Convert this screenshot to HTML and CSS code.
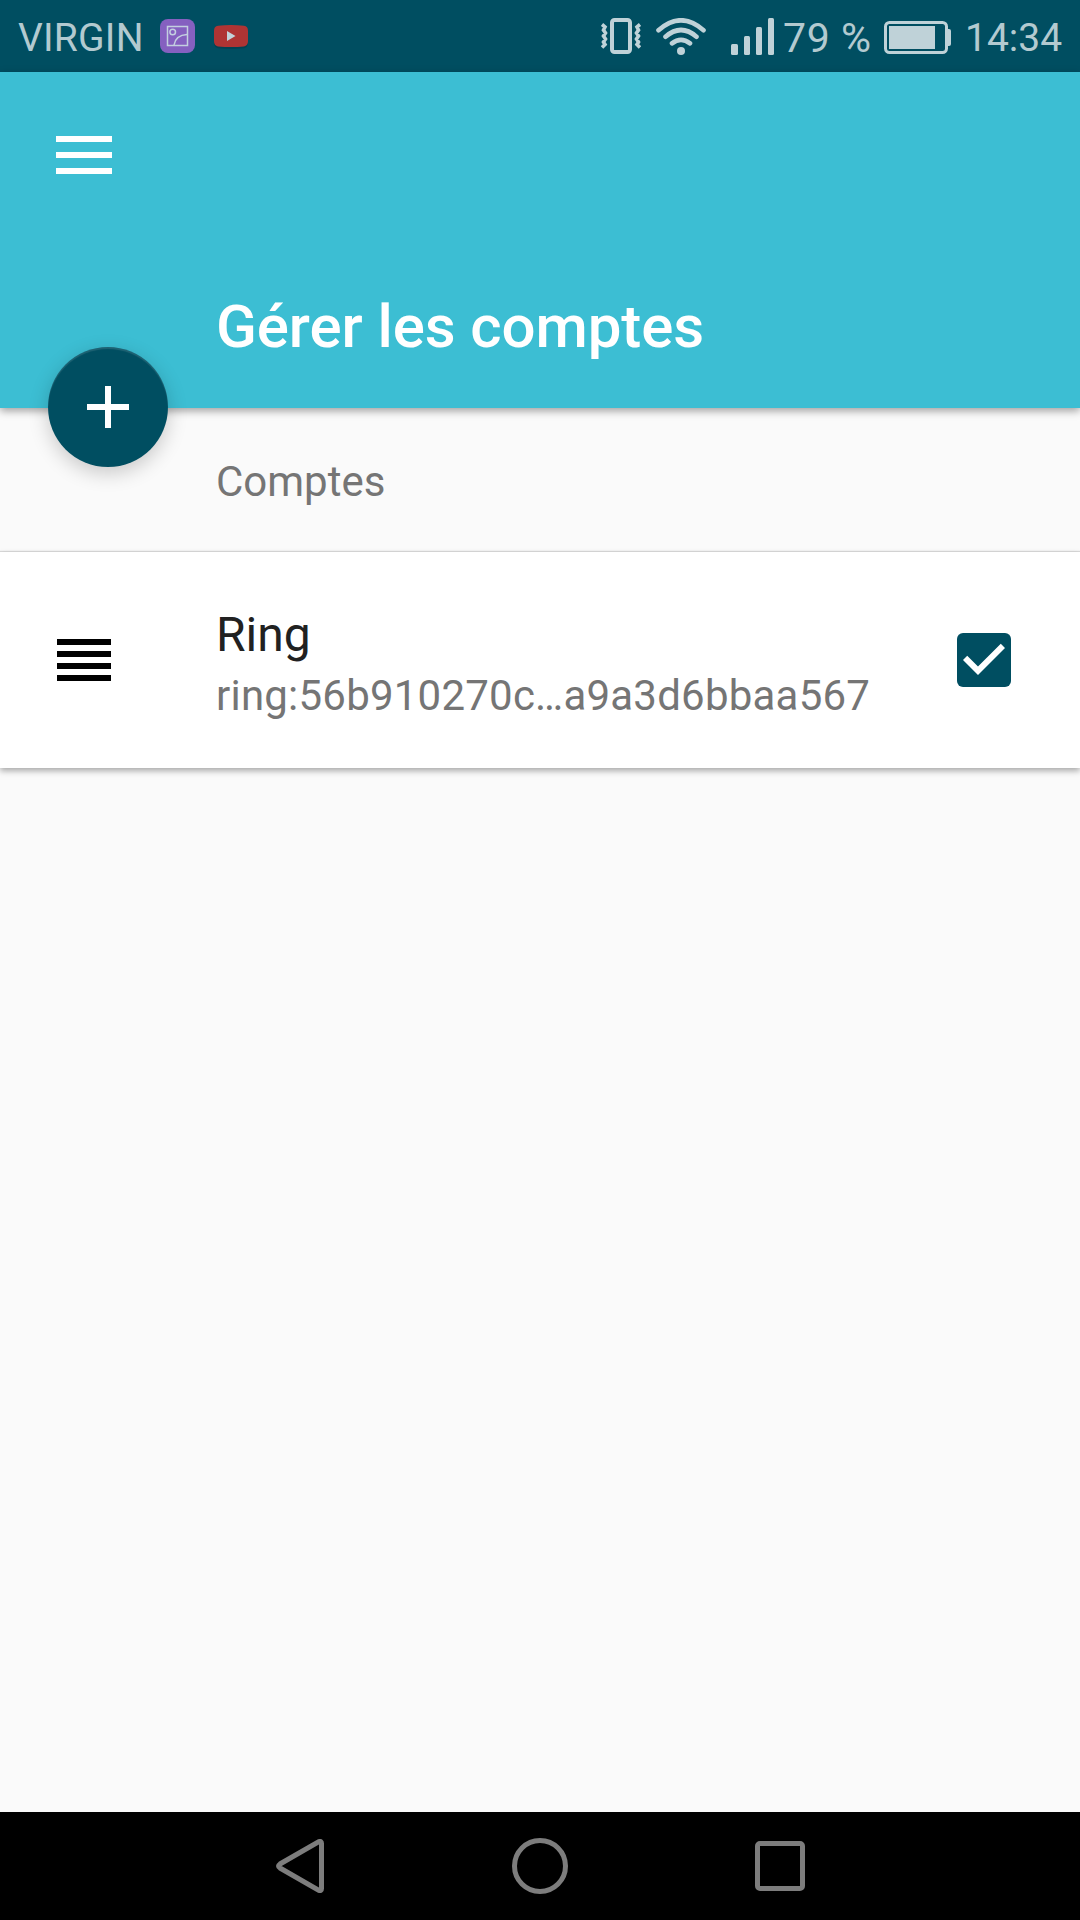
FILE: index.html
```html
<!DOCTYPE html>
<html lang="fr">
<head>
<meta charset="utf-8">
<title>Gérer les comptes</title>
<link rel="stylesheet" href="styles.css">
</head>
<body>
<div class="screen">
  <div class="status">
    <span class="carrier">VIRGIN</span>
    <svg class="gallery" width="35" height="34" viewBox="0 0 35 34">
      <rect width="35" height="34" rx="8" fill="#8560c0"/>
      <g fill="none" stroke="#c3cfe0" stroke-width="1.5"><rect x="7.5" y="7.5" width="20" height="19"/><circle cx="12.7" cy="13" r="2.8"/><path d="M14 26C15 20 19 16 27 15.5"/></g>
    </svg>
    <svg class="video" width="34" height="24" viewBox="0 0 34 24">
      <path d="M4 1Q17-.6 30 1q4 .5 4 5v11q0 4.500-4 5.200-13 1.600-26 0-4-.7-4-5.200V6q0-4.500 4-5z" transform="translate(0 1)" fill="#024254"/>
      <path d="M4 .8Q17-.6 30 .8q4 .5 4 5v10.500q0 4.500-4 5.200-13 1.200-26 0-4-.7-4-5.200V5.800q0-4.500 4-5z" fill="#af3434"/>
      <path d="M13 6l8.500 5L13 16z" fill="#c2d3da"/>
    </svg>
    <svg class="vibrate" width="40" height="36" viewBox="0 0 40 36" fill="none" stroke="#bfd2d8">
      <rect x="11" y="2" width="18" height="32" rx="2.500" stroke-width="4"/>
      <path d="M1 6.500l3 2.500-1.500 3 2 3-2 3 2 3-2 3 1.500 2.500-3 3M39 6.500l-3 2.500 1.500 3-2 3 2 3-2 3 2 3-1.500 2.500 3 3" stroke-width="3.600"/>
    </svg>
    <svg class="wifi" width="50" height="37" viewBox="0 0 50 37" fill="none" stroke="#bfd2d8" stroke-width="4.600" stroke-linecap="round">
      <path d="M2.500 12.200Q25-7.600 47.500 12.200M9.500 18.700Q25 5.300 40.500 18.700M16 25.400Q25 18.200 34 25.400"/>
      <circle cx="25" cy="33" r="4" fill="#bfd2d8" stroke="none"/>
    </svg>
    <svg class="signal" width="43" height="37" viewBox="0 0 43 37" fill="#bfd2d8">
      <rect y="26" width="7" height="11" rx="1.500"/><rect x="13" y="18" width="6" height="19" rx="1.500"/><rect x="25" y="9" width="6" height="28" rx="1.500"/><rect x="37" width="6" height="37" rx="1.500"/>
    </svg>
    <span class="percent">79 %</span>
    <svg class="battery" width="67" height="33" viewBox="0 0 67 33" fill="#bfd2d8">
      <rect x="1.500" y="1.500" width="61" height="30" rx="4" fill="none" stroke="#bfd2d8" stroke-width="3"/>
      <rect x="5" y="5" width="46" height="23"/><path d="M64 8h1q2 0 2 2v13q0 2-2 2h-1z"/>
    </svg>
    <span class="clock">14:34</span>
  </div>
  <header class="header">
    <svg class="menu" width="56" height="38" viewBox="0 0 56 38" fill="#fff"><path d="M0 0h56v6H0zM0 16h56v6H0zM0 32h56v6H0z"/></svg>
    <h1 class="title">Gérer les comptes</h1>
    <button class="fab" aria-label="Ajouter">
      <svg width="42" height="42" viewBox="0 0 42 42" fill="#fff"><path d="M18 0h6v18h18v6H24v18h-6V24H0v-6h18z"/></svg>
    </button>
  </header>
  <h2 class="section">Comptes</h2>
  <div class="account">
    <svg class="handle" width="54" height="42" viewBox="0 0 54 42"><path d="M0 0h54v6H0zM0 12h54v6H0zM0 24h54v6H0zM0 36h54v6H0z"/></svg>
    <div class="info">
      <div class="name">Ring</div>
      <div class="uri">ring:56b910270c…a9a3d6bbaa567</div>
    </div>
    <svg class="check" width="54" height="54" viewBox="3 3 18 18"><rect x="3" y="3" width="18" height="18" rx="2" fill="#004e61"/><path d="M10 17l-5-5 1.410-1.410L10 14.170l7.590-7.590L19 8z" fill="#fff"/></svg>
  </div>
  <nav class="nav">
    <svg width="48" height="54" viewBox="0 0 48 54"><path d="M43 2.600Q45.500 1.800 45.500 4.500v45q0 2.700-2.500 1.900L4 29Q1 27 4 25z"/></svg>
    <svg width="56" height="56" viewBox="0 0 56 56"><circle cx="28" cy="28" r="25.500"/></svg>
    <svg width="50" height="50" viewBox="0 0 50 50"><rect x="2.500" y="2.500" width="45" height="45" rx="2.500"/></svg>
  </nav>
</div>
</body>
</html>
```
FILE: styles.css
```css
* { box-sizing: border-box; }
body { margin: 0; font-family: Roboto, sans-serif; }
.screen {
  display: flex;
  flex-direction: column;
  width: 1080px;
  height: 1920px;
  background: #fafafa;
  overflow: hidden;
}
.status {
  display: flex;
  align-items: flex-start;
  height: 72px;
  padding-left: 18px;
  background: #004e61;
  color: #b3cad0;
  white-space: nowrap;
}
.carrier, .clock, .percent { font-size: 39px; line-height: 46px; padding-top: 15px; }
.carrier { width: 142px; letter-spacing: .2px; }
.gallery { margin-top: 19px; }
.video { margin: 25px 353px 0 19px; }
.vibrate { margin-top: 18px; }
.wifi { margin: 18px 25px 0 15px; }
.signal { margin-top: 18px; }
.percent { width: 101px; margin-left: 9px; font-size: 41px; letter-spacing: .6px; }
.battery { margin-top: 21px; }
.clock { margin-left: 14px; }
.header {
  position: relative;
  z-index: 1;
  display: flex;
  flex-direction: column;
  height: 336px;
  padding-top: 64px;
  background: #3cbed3;
  box-shadow: 0 3px 8px rgba(0, 0, 0, .36);
}
.menu { margin-left: 56px; }
.title {
  margin: 118px 0 0 216px;
  color: #fff;
  font-size: 60px;
  font-weight: 500;
  letter-spacing: -.08px;
  line-height: 70px;
}
.fab {
  position: absolute;
  left: 48px;
  bottom: -59px;
  display: flex;
  align-items: center;
  justify-content: center;
  width: 120px;
  height: 120px;
  padding: 0;
  border: 0;
  border-radius: 50%;
  background: #004e61;
  box-shadow: 0 6px 20px rgba(0, 0, 0, .2), inset 0 2px 1px rgba(255, 255, 255, .12);
}
.section {
  height: 144px;
  margin: 0;
  padding: 49px 0 0 216px;
  color: #757575;
  font-size: 42px;
  font-weight: 400;
  line-height: 49px;
}
.account {
  display: flex;
  align-items: center;
  height: 216px;
  padding: 0 69px 0 57px;
  background: #fff;
  box-shadow: 0 3px 6px rgba(0, 0, 0, .32), 0 -1px 1px rgba(0, 0, 0, .12);
}
.info { flex: 1; padding: 10px 0 0 105px; }
.name { color: #212121; font-size: 48px; line-height: 56px; }
.uri { margin-top: 5px; color: #757575; font-size: 42px; letter-spacing: .22px; line-height: 56px; }
.nav {
  display: flex;
  align-items: center;
  gap: 188px;
  height: 108px;
  margin-top: auto;
  padding-left: 276px;
  background: #000;
}
.nav svg { fill: none; stroke: #7d7d7d; stroke-width: 5; }
.nav svg:last-child { margin-left: -1px; }
```
